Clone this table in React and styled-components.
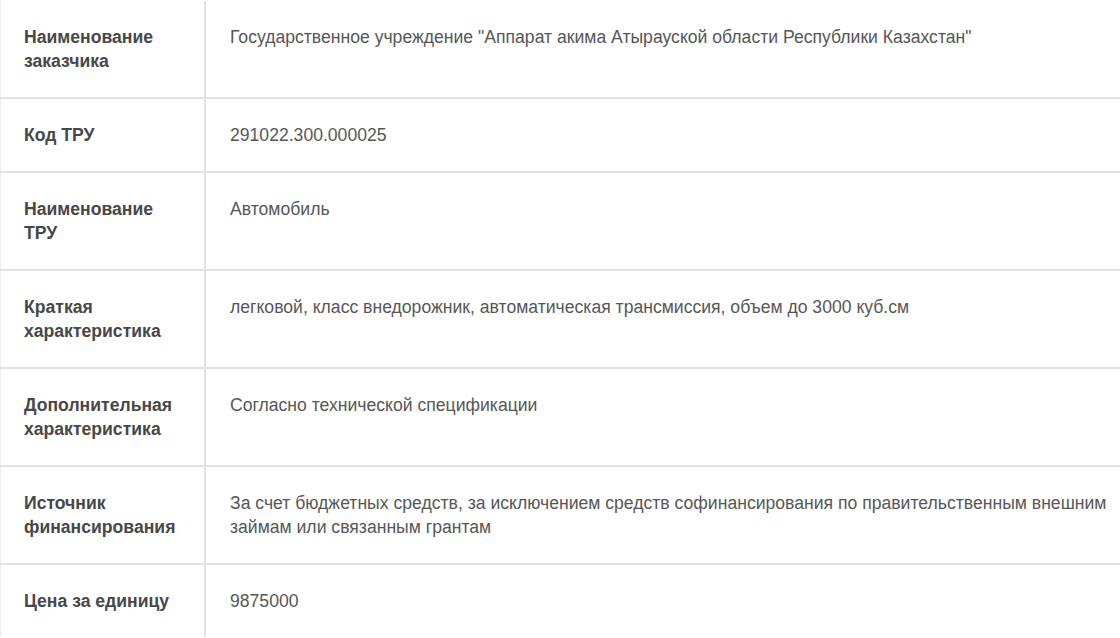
import React from 'react'
import styled, { createGlobalStyle } from 'styled-components'

const GlobalStyle = createGlobalStyle`
    body {
        margin: 0;
        background: #fff;
        font-family: "Liberation Sans", Arial, sans-serif;
    }
`

const rows = [
    {
        label: 'Наименование заказчика',
        value: 'Государственное учреждение "Аппарат акима Атырауской области Республики Казахстан"',
    },
    { label: 'Код ТРУ', value: '291022.300.000025' },
    { label: 'Наименование ТРУ', value: 'Автомобиль' },
    {
        label: 'Краткая характеристика',
        value: 'легковой, класс внедорожник, автоматическая трансмиссия, объем до 3000 куб.см',
    },
    { label: 'Дополнительная характеристика', value: 'Согласно технической спецификации' },
    {
        label: 'Источник финансирования',
        value: 'За счет бюджетных средств, за исключением средств софинансирования по правительственным внешним займам или связанным грантам',
    },
    { label: 'Цена за единицу', value: '9875000' },
]

const App = () => (
    <>
        <GlobalStyle />
        <Table>
            {rows.map(row => (
                <Row key={row.label}>
                    <Label>{row.label}</Label>
                    <Value>{row.value}</Value>
                </Row>
            ))}
        </Table>
    </>
)

const Table = styled.div`
    display: flex;
    flex-direction: column;
    padding-top: 1px;
    width: 1120px;
    overflow: hidden;
`

const Row = styled.div`
    display: grid;
    grid-template-columns: 206px 1fr;
    border-bottom: 2px solid #e2e2e2;
    font-size: 17.6px;
    line-height: 24px;

    &:last-child {
        border-bottom: none;
    }
`

const Label = styled.div`
    box-sizing: border-box;
    padding: 24px 24px 24px 23px;
    border-left: 1px solid #ececec;
    border-right: 2px solid #e2e2e2;
    font-weight: bold;
    color: #474747;
`

const Value = styled.div`
    padding: 24px 8px 24px 24px;
    color: #575757;
`

export default App
